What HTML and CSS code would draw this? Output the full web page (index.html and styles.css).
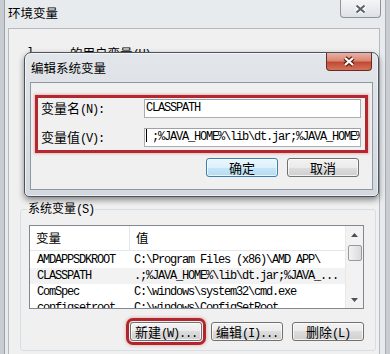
FILE: index.html
```html
<!DOCTYPE html>
<html lang="zh-CN">
<head>
<meta charset="utf-8">
<title>环境变量</title>
<link rel="stylesheet" href="styles.css">
</head>
<body>
<div class="win">
  <div class="win-title">
    <span class="win-caption">环境变量</span>
    <span class="win-close"><svg width="13" height="10" viewBox="0 0 13 10"><path d="M2.5 1.5L10.5 8.5M10.5 1.5L2.5 8.5" stroke="#ffffff" stroke-width="4.4"/><path d="M2.5 1.5L10.5 8.5M10.5 1.5L2.5 8.5" stroke="#5d636b" stroke-width="2.2"/></svg></span>
  </div>
  <div class="client">
    <div class="user-group"><span class="m">l</span><span class="user-label">的用户变量<span class="m">(U)</span></span></div>
    <fieldset class="group">
      <legend>系统变量<span class="m">(S)</span></legend>
      <div class="lv">
        <div class="lv-body">
          <div class="lv-head"><span class="c1">变量</span><span class="c2">值</span></div>
          <div class="lv-rows">
            <div class="lv-row"><span class="c1 m">AMDAPPSDKROOT</span><span class="c2 m">C:\Program Files (x86)\AMD APP\</span></div>
            <div class="lv-row sel"><span class="c1 m">CLASSPATH</span><span class="c2 m">.;%JAVA_HOME%\lib\dt.jar;%JAVA_...</span></div>
            <div class="lv-row"><span class="c1 m">ComSpec</span><span class="c2 m">C:\windows\system32\cmd.exe</span></div>
            <div class="lv-row"><span class="c1 m">configsetroot</span><span class="c2 m">C:\windows\ConfigSetRoot</span></div>
          </div>
        </div>
        <div class="sb">
          <div class="sb-btn"><svg width="7" height="4" viewBox="0 0 7 4"><path d="M3.5 0L7 4H0Z" fill="#505050"/></svg></div>
          <div class="sb-thumb"></div>
          <div class="sb-space"></div>
          <div class="sb-btn"><svg width="7" height="4" viewBox="0 0 7 4"><path d="M0 0H7L3.5 4Z" fill="#505050"/></svg></div>
        </div>
      </div>
      <div class="btn-row">
        <button class="btn hl">新建<span class="m">(W)...</span></button>
        <button class="btn">编辑<span class="m">(I)...</span></button>
        <button class="btn">删除<span class="m">(L)</span></button>
      </div>
    </fieldset>
  </div>
</div>

<div class="dlg">
  <div class="dlg-title">
    <span class="dlg-caption">编辑系统变量</span>
    <span class="dlg-close"><svg width="14" height="11" viewBox="0 0 14 11"><path d="M3 2L11 9M11 2L3 9" stroke="#5a1c12" stroke-width="4.4"/><path d="M3 2L11 9M11 2L3 9" stroke="#ffffff" stroke-width="2.3"/></svg></span>
  </div>
  <div class="dlg-client">
    <div class="redbox">
      <div class="field">
        <label>变量名<span class="m">(N):</span></label>
        <div class="input m">CLASSPATH</div>
      </div>
      <div class="field">
        <label>变量值<span class="m">(V):</span></label>
        <div class="input m"><span class="caret"></span>;%JAVA_HOME%\lib\dt.jar;%JAVA_HOME%\lib\tools.jar</div>
      </div>
    </div>
    <div class="dlg-btns">
      <button class="btn def">确定</button>
      <button class="btn">取消</button>
    </div>
  </div>
</div>
</body>
</html>
```

FILE: styles.css
```css
body {
  margin: 0;
  width: 390px;
  height: 354px;
  overflow: hidden;
  position: relative;
  background: #c9cdd2;
  font-family: "Noto Sans CJK SC", sans-serif;
  font-size: 13px;
  color: #000;
}

.m {
  font-family: "Liberation Mono", monospace;
  font-size: 12px;
  letter-spacing: -1.2px;
}

/* outer window */
.win {
  margin-left: 4px;
  width: 382px;
  height: 354px;
  box-sizing: border-box;
  background: #e8ebee;
  border-left: 1px solid #9ea3a9;
  border-right: 1px solid #a9aeb4;
}

.win-title {
  height: 28px;
  display: flex;
  justify-content: space-between;
  align-items: flex-start;
}

.win-caption {
  padding: 4px 0 0 3px;
  line-height: 18px;
  font-size: 12.5px;
}

.win-close {
  width: 41px;
  height: 18px;
  margin-right: 4px;
  box-sizing: border-box;
  border: 1px solid #8e949b;
  border-top: none;
  border-radius: 0 0 4px 4px;
  background: linear-gradient(#f4f5f7, #dde1e6);
  display: flex;
  align-items: center;
  justify-content: center;
}

.client {
  margin-left: 3px;
  width: 372px;
  height: 326px;
  box-sizing: border-box;
  border: 1px solid #b5b9be;
  border-bottom: none;
  background: #f0f0f0;
}

.user-group {
  height: 171px;
  box-sizing: border-box;
  padding: 16px 0 0 18px;
  line-height: 16px;
  display: flex;
  align-items: flex-start;
}

.user-label {
  margin-left: 37px;
  font-size: 12.5px;
}

.group {
  margin: 0 0 0 11px;
  width: 356px;
  min-width: 0;
  box-sizing: border-box;
  padding: 7px 11px 0 8px;
  border: 1px solid #d5dfe5;
  border-radius: 3px;
  height: 151px;
}

.group legend {
  padding: 0 1px;
  margin-left: -2px;
  line-height: 16px;
  font-size: 12px;
}

/* list view */
.lv {
  display: flex;
  width: 335px;
  height: 84px;
  box-sizing: border-box;
  border: 1px solid #828790;
  background: #fff;
  overflow: hidden;
}

.lv-body {
  flex: 1;
  min-width: 0;
  overflow: hidden;
}

.lv-head {
  display: grid;
  grid-template-columns: 100px 1fr;
  height: 24px;
  border-bottom: 1px solid #e3e6ea;
  line-height: 24px;
  font-size: 12.5px;
}

.lv-head .c1 {
  padding-left: 6px;
  border-right: 1px solid #e3e6ea;
}

.lv-head .c2 {
  padding-left: 6px;
}

.lv-rows {
  padding-top: 1px;
}

.lv-row {
  display: grid;
  grid-template-columns: 100px 1fr;
  height: 16px;
  line-height: 16px;
  white-space: nowrap;
}

.lv-row span {
  overflow: hidden;
}

.lv-row .c1 {
  padding-left: 7px;
}

.lv-row .c2 {
  padding-left: 4px;
}

.lv-row.sel {
  background: #f2f2f2;
}

.sb {
  width: 17px;
  background: #f2f2f2;
  border-left: 1px solid #e8e8e8;
  display: flex;
  flex-direction: column;
  align-items: center;
}

.sb-btn {
  height: 17px;
  width: 100%;
  display: flex;
  align-items: center;
  justify-content: center;
}

.sb-thumb {
  width: 14px;
  height: 16px;
  margin-top: 2px;
  box-sizing: border-box;
  border: 1px solid #9a9a9a;
  border-radius: 2px;
  background: linear-gradient(90deg, #f3f3f3, #dadada);
}

.sb-space {
  flex: 1;
}

/* buttons */
.btn-row {
  display: flex;
  justify-content: flex-end;
  gap: 9px;
  width: 335px;
  margin-top: 13px;
}

.btn {
  width: 72px;
  height: 19px;
  box-sizing: border-box;
  border: 1px solid #707070;
  border-radius: 3px;
  background: linear-gradient(#f2f2f2 0%, #ebebeb 50%, #dddddd 50%, #cfcfcf 100%);
  box-shadow: inset 0 0 0 1px rgba(255, 255, 255, 0.7);
  font-family: inherit;
  font-size: 13px;
  line-height: 17px;
  padding: 0;
  color: #000;
  white-space: nowrap;
}

.btn.hl {
  box-shadow: inset 0 0 0 1px rgba(255, 255, 255, 0.7), 0 0 0 1px #f0f0f0, 0 0 0 4px #b1262d, 0 0 3px 5px rgba(214, 120, 120, 0.4);
}

.btn.def {
  border-color: #3c7fb1;
  background: linear-gradient(#eaf6fd 0%, #dcf0fb 50%, #c6e6f8 50%, #b4dcf2 100%);
}

/* edit dialog */
.dlg {
  position: absolute;
  left: 24px;
  top: 52px;
  width: 355px;
  height: 145px;
  box-sizing: border-box;
  border: 1px solid #4b535c;
  border-radius: 7px 7px 5px 5px;
  background: linear-gradient(#e2e6eb, #d3d8de);
  box-shadow: 0 3px 6px rgba(0, 0, 0, 0.45), inset 0 0 0 1px rgba(255, 255, 255, 0.6);
}

.dlg-title {
  height: 29px;
  display: flex;
  justify-content: space-between;
  align-items: flex-start;
}

.dlg-caption {
  padding: 6px 0 0 6px;
  line-height: 18px;
  font-size: 12.5px;
}

.dlg-close {
  width: 46px;
  height: 18px;
  margin-right: 6px;
  box-sizing: border-box;
  border: 1px solid #6b2a22;
  border-top: none;
  border-radius: 0 0 4px 4px;
  background: linear-gradient(#eab1a5, #d98875 45%, #c24a31 55%, #d2735c);
  display: flex;
  align-items: center;
  justify-content: center;
}

.dlg-client {
  margin: 0 5px;
  height: 108px;
  box-sizing: border-box;
  border: 1px solid #8d98a5;
  background: #f0f0f0;
  padding: 12px 4px 0 4px;
}

.redbox {
  height: 58px;
  box-sizing: border-box;
  border: 3px solid #b2282e;
  box-shadow: 0 0 2px 1px rgba(226, 140, 140, 0.55);
  padding: 1px 4px 0 0;
  display: flex;
  flex-direction: column;
  gap: 10px;
}

.field {
  display: flex;
  align-items: center;
  height: 19px;
}

.field label {
  width: 106px;
  box-sizing: border-box;
  padding-left: 3px;
  line-height: 19px;
}

.input {
  width: 217px;
  height: 19px;
  box-sizing: border-box;
  border: 1px solid #abadb3;
  border-top-color: #9ea1a8;
  background: #fff;
  padding-left: 1px;
  line-height: 17px;
  white-space: nowrap;
  overflow: hidden;
}

.caret {
  display: inline-block;
  width: 6px;
  height: 13px;
  box-sizing: border-box;
  border-left: 1px solid #000;
  vertical-align: -2px;
}

.dlg-btns {
  display: flex;
  justify-content: flex-end;
  gap: 9px;
  margin-top: 5px;
  padding-right: 9px;
}
```
